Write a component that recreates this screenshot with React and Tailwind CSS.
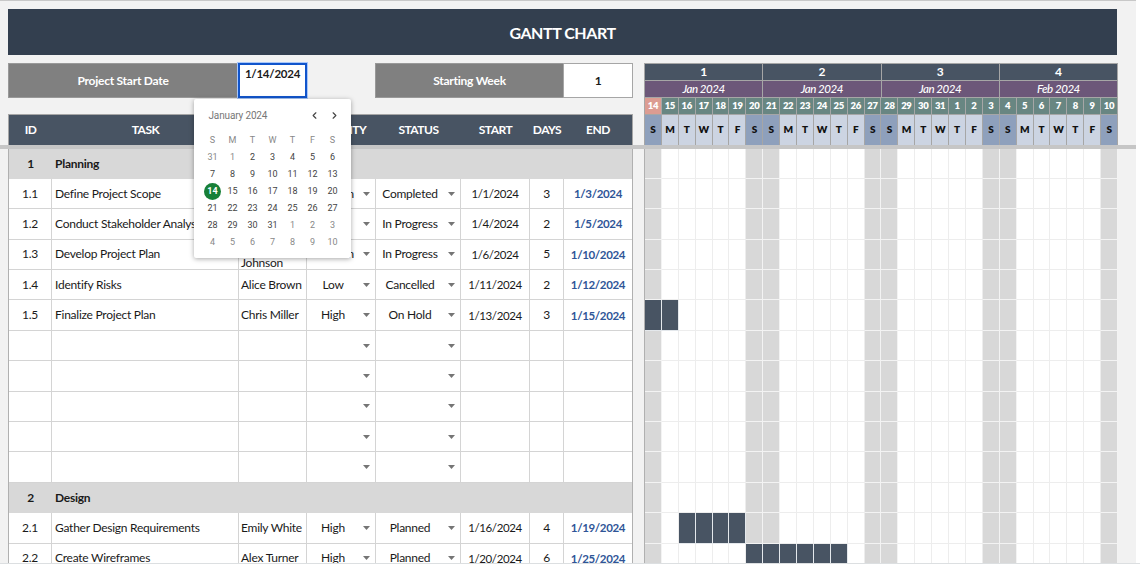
import React from 'react';
import { ChevronLeft, ChevronRight } from 'lucide-react';

const tasks = [
  { id: '1', task: 'Planning', section: true },
  { id: '1.1', task: 'Define Project Scope', priority: 'Medium', status: 'Completed', start: '1/1/2024', days: 3, end: '1/3/2024' },
  { id: '1.2', task: 'Conduct Stakeholder Analysis', status: 'In Progress', start: '1/4/2024', days: 2, end: '1/5/2024' },
  { id: '1.3', task: 'Develop Project Plan', owner: 'Johnson', wrapped: true, priority: 'Medium', status: 'In Progress', start: '1/6/2024', days: 5, end: '1/10/2024' },
  { id: '1.4', task: 'Identify Risks', owner: 'Alice Brown', priority: 'Low', status: 'Cancelled', start: '1/11/2024', days: 2, end: '1/12/2024' },
  { id: '1.5', task: 'Finalize Project Plan', owner: 'Chris Miller', priority: 'High', status: 'On Hold', start: '1/13/2024', days: 3, end: '1/15/2024', bar: [0, 1] },
  {},
  {},
  {},
  {},
  {},
  { id: '2', task: 'Design', section: true },
  { id: '2.1', task: 'Gather Design Requirements', owner: 'Emily White', priority: 'High', status: 'Planned', start: '1/16/2024', days: 4, end: '1/19/2024', bar: [2, 5] },
  { id: '2.2', task: 'Create Wireframes', owner: 'Alex Turner', priority: 'High', status: 'Planned', start: '1/20/2024', days: 6, end: '1/25/2024', bar: [6, 11] },
];

const weeks = [
  { number: 1, month: 'Jan 2024' },
  { number: 2, month: 'Jan 2024' },
  { number: 3, month: 'Jan 2024' },
  { number: 4, month: 'Feb 2024' },
];

const dayLetters = ['S', 'M', 'T', 'W', 'T', 'F', 'S'];

// Jan 14 to Feb 10
const days = Array.from({ length: 28 }, (_, i) => ({
  date: i < 18 ? 14 + i : i - 17,
  letter: dayLetters[i % 7],
  weekend: i % 7 === 0 || i % 7 === 6,
}));

// Dec 31 to Feb 10
const calendarDays = Array.from({ length: 42 }, (_, i) => {
  if (i === 0) return { date: 31, muted: true };
  if (i > 31) return { date: i - 31, muted: true };
  return { date: i, muted: i === 1 };
});

const tableCols = 'grid grid-cols-[43px_187px_68px_69px_85px_69px_34px_68px]';
const dayCols = 'grid grid-cols-[repeat(28,minmax(0,1fr))]';

const Arrow = () => (
  <svg className="w-[7px] h-[4px] shrink-0" viewBox="0 0 7 4">
    <path d="M0 0h7L3.5 4z" fill="#757575" />
  </svg>
);

const SelectCell = ({ value }) => (
  <div className="flex items-center border-r border-b border-[#d4d4d4] pr-[5px]">
    <span className="flex-1 text-center -ml-[4px]">{value}</span>
    <Arrow />
  </div>
);

const TaskRow = ({ row }) => {
  if (row.section) {
    return (
      <div className={`${tableCols} h-[30.4px] items-center bg-[#d8d8d8] font-bold`}>
        <span className="text-center">{row.id}</span>
        <span className="pl-[3px]">{row.task}</span>
      </div>
    );
  }

  const cell = 'flex items-center border-r border-b border-[#d4d4d4]';

  return (
    <div className={`${tableCols} h-[30.4px] bg-white`}>
      <div className={`${cell} justify-center`}>{row.id}</div>
      <div className={`${cell} pl-[3px] whitespace-nowrap`}>{row.task}</div>
      <div className={`${cell} pl-[2px] whitespace-nowrap`}>
        <span className={row.wrapped ? 'self-end leading-[13px]' : ''}>{row.owner}</span>
      </div>
      <SelectCell value={row.priority} />
      <SelectCell value={row.status} />
      <div className={`${cell} justify-center text-[11.5px] tracking-[-0.4px]`}>{row.start}</div>
      <div className={`${cell} justify-center`}>{row.days}</div>
      <div className="flex items-center justify-center border-b border-[#d4d4d4] font-bold text-[11.5px] tracking-[-0.35px] text-[#2f5597]">{row.end}</div>
    </div>
  );
};

const TimelineRow = ({ bar }) => (
  <div className={`${dayCols} h-[30.4px]`}>
    {days.map((day, i) => {
      const filled = bar && i >= bar[0] && i <= bar[1];
      let color = 'bg-white border-[#ededed]';
      if (day.weekend) color = 'bg-[#d8d8d8] border-[#f3f3f3]';
      if (filled) color = 'bg-[#485463] border-[#e4e8ec]';
      return <div key={i} className={`border-r border-b ${color}`} />;
    })}
  </div>
);

const TimelineHeader = () => (
  <div className="w-[474px] ml-[11px] border-l border-t border-[#a6a6a6] text-white">
    <div className="grid grid-cols-4 text-center">
      {weeks.map((week) => (
        <div key={week.number} className="border-r border-[#a6a6a6]">
          <div className="h-[17px] leading-[16px] bg-[#485463] border-b border-[#a6a6a6] text-[12px] font-bold">{week.number}</div>
          <div className="h-[17px] leading-[16px] bg-[#6c5779] border-b border-[#a6a6a6] text-[11.5px] tracking-[-0.45px] font-medium italic">{week.month}</div>
        </div>
      ))}
    </div>
    <div className={`${dayCols} text-center text-[9.5px] font-extrabold`}>
      {days.map((day, i) => (
        <div key={i} className="border-r border-[#a6a6a6]">
          <div className={`h-[17px] leading-[16px] border-b border-[#a6a6a6] tracking-[-0.3px] ${i === 0 ? 'bg-[#dc9c92]' : 'bg-[#688682]'}`}>{day.date}</div>
          <div className={`h-[30px] leading-[28px] text-[10px] text-[#111] ${day.weekend ? 'bg-[#8ea0bc]' : 'bg-[#ccd4e2]'}`}>{day.letter}</div>
        </div>
      ))}
    </div>
  </div>
);

const DatePicker = () => (
  <div className="absolute left-[194px] top-[99px] z-10 w-[157px] h-[159px] rounded-[2px] bg-white px-[8.5px] font-[Roboto,sans-serif] tracking-normal text-[#444] shadow-[0_1px_5px_rgba(0,0,0,0.35)]">
    <div className="flex items-center h-[33px] pl-[6px] text-[10px] tracking-[-0.15px] text-[#777]">
      <span className="flex-1">January 2024</span>
      <ChevronLeft className="w-[11px] h-[11px] text-[#444] mr-[9px]" strokeWidth={2.5} />
      <ChevronRight className="w-[11px] h-[11px] text-[#444] mr-[3px]" strokeWidth={2.5} />
    </div>
    <div className="grid grid-cols-7 auto-rows-[17px] items-center justify-items-center text-[9px]">
      {dayLetters.map((letter, i) => (
        <span key={i} className="text-[#888]">{letter}</span>
      ))}
      {calendarDays.map((day, i) => (
        <span
          key={i}
          className={`flex items-center justify-center w-[17px] h-[17px] rounded-full ${
            i === 14 ? 'bg-[#188038] text-white font-bold' : day.muted ? 'text-[#888]' : ''
          }`}
        >
          {day.date}
        </span>
      ))}
    </div>
  </div>
);

const App = () => {
  return (
    <div className="relative w-[1140px] h-[570px] overflow-hidden bg-white font-[Lato,Carlito,sans-serif] text-[12px] tracking-[-0.25px] text-[#1a1a1a]">
      <div className="w-[1136px] h-[563px] overflow-hidden bg-[#f2f2f2] border-t border-[#c8c8c8]">
        {/* Title */}
        <div className="mt-2 ml-2 w-[1109px] h-[46px] flex items-center justify-center bg-[#333f4f] pt-[2px] text-white text-[16px] tracking-[-0.45px] font-bold">
          GANTT CHART
        </div>

        {/* Settings and table headings */}
        <div className="flex mt-2 pl-2 h-[82px]">
          <div className="w-[625px] flex flex-col justify-between">
            <div className="flex h-[35px] items-stretch font-bold">
              <div className="w-[230px] flex items-center justify-center bg-[#808080] border border-[#999] text-white">Project Start Date</div>
              <div className="w-[69px] h-[35px] flex justify-center bg-white border-2 border-[#1155cc] ring-1 ring-[#a8c7fa] pt-px leading-[15px] text-[11.5px] tracking-[-0.25px]">1/14/2024</div>
              <div className="w-[68px]" />
              <div className="w-[188px] flex items-center justify-center bg-[#808080] border border-[#999] border-r-0 text-white">Starting Week</div>
              <div className="flex-1 flex items-center justify-center bg-white border border-[#a6a6a6]">1</div>
            </div>
            <div className={`${tableCols} h-[31px] border border-[#a6a6a6] border-b-0 bg-[#485463] items-center text-center text-white font-bold tracking-[-0.5px]`}>
              <span>ID</span>
              <span>TASK</span>
              <span />
              <span className="-ml-px">PRIORITY</span>
              <span>STATUS</span>
              <span>START</span>
              <span>DAYS</span>
              <span>END</span>
            </div>
          </div>
          <TimelineHeader />
        </div>

        {/* Frozen rows divider */}
        <div className="h-[3.5px] bg-[#c6c6c6]" />

        {/* Rows */}
        <div className="flex pl-2">
          <div className="w-[625px] border-x border-[#b0b0b0]">
            {tasks.map((row, i) => (
              <TaskRow key={i} row={row} />
            ))}
          </div>
          <div className="w-[474px] ml-[11px] border-l border-[#b0b0b0]">
            {tasks.map((row, i) => (
              <TimelineRow key={i} bar={row.bar} />
            ))}
          </div>
        </div>
      </div>
      <div className="h-px bg-[#dcdfe1]" />

      <DatePicker />
    </div>
  );
};

export default App;
